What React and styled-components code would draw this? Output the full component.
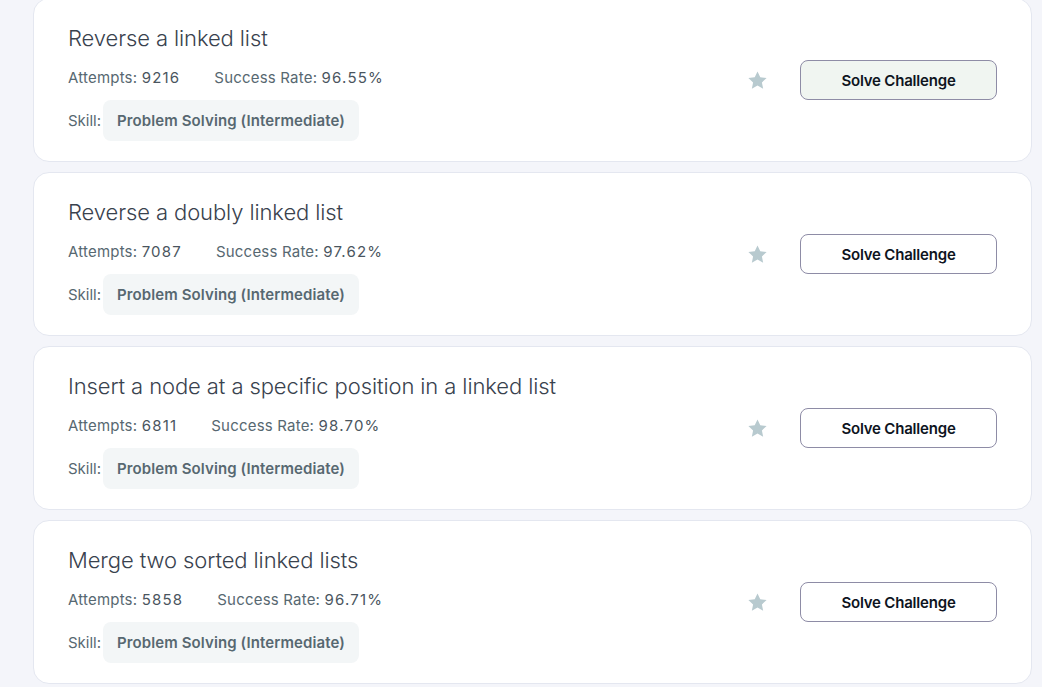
import React from 'react'
import styled, { createGlobalStyle } from 'styled-components'

const GlobalStyle = createGlobalStyle`
    html, body {
        margin: 0;
        padding: 0;
        background: #f4f5fa;
        font-family: Inter, "Noto Sans", sans-serif;
        overflow: hidden;
    }
`

const List = styled.div`
    display: flex;
    flex-direction: column;
    gap: 10px;
    margin-top: -2px;
    padding: 0 10px 0 33px;
`

const Card = styled.div`
    display: flex;
    align-items: center;
    justify-content: space-between;
    height: 164px;
    box-sizing: border-box;
    padding: 0 34px;
    background: #fff;
    border: 1px solid #e4e7f0;
    border-radius: 16px;
`

const Info = styled.div`
    display: flex;
    flex-direction: column;
    margin-top: 4px;
`

const Title = styled.h4`
    margin: 0 0 16px;
    font-size: 22px;
    font-weight: 300;
    line-height: 28px;
    color: #39424e;
    letter-spacing: -0.1px;
`

const Stats = styled.div`
    display: flex;
    gap: 34px;
    font-size: 15px;
    color: #576871;
    line-height: 20px;
    letter-spacing: 0.2px;
`

const Stat = styled.span`
    & b {
        font-weight: 400;
        color: #4a555e;
        letter-spacing: 1.2px;
    }
`

const SkillRow = styled.div`
    display: flex;
    align-items: center;
    gap: 2px;
    margin-top: 12px;
    font-size: 15px;
    color: #576871;
`

const Pill = styled.span`
    display: inline-flex;
    align-items: center;
    height: 41px;
    padding: 0 14px;
    background: #f3f6f7;
    border-radius: 8px;
    font-weight: 600;
    color: #576871;
    letter-spacing: 0.1px;
`

const Actions = styled.div`
    display: flex;
    align-items: center;
    gap: 31px;
`

const Star = styled.svg`
    width: 23px;
    height: 23px;
    fill: #b8cacf;
`

const SolveButton = styled.button`
    width: 197px;
    height: 40px;
    border: 1px solid #8e8ca6;
    border-radius: 8px;
    background: ${props => props.$active ? '#f0f5f1' : '#fff'};
    font-family: inherit;
    font-size: 15px;
    font-weight: 600;
    color: #0e141e;
    letter-spacing: -0.2px;
    cursor: pointer;
`

const challenges = [
    { title: 'Reverse a linked list', attempts: '9216', rate: '96.55%', active: true },
    { title: 'Reverse a doubly linked list', attempts: '7087', rate: '97.62%' },
    { title: 'Insert a node at a specific position in a linked list', attempts: '6811', rate: '98.70%' },
    { title: 'Merge two sorted linked lists', attempts: '5858', rate: '96.71%' },
]

const Challenge = ({ title, attempts, rate, active }) => (
    <Card>
        <Info>
            <Title>{title}</Title>
            <Stats>
                <Stat>Attempts: <b>{attempts}</b></Stat>
                <Stat>Success Rate: <b>{rate}</b></Stat>
            </Stats>
            <SkillRow>
                Skill:
                <Pill>Problem Solving (Intermediate)</Pill>
            </SkillRow>
        </Info>
        <Actions>
            <Star viewBox="0 0 24 24">
                <path d="M12 2.5l2.9 6.1 6.6.8-4.9 4.6 1.3 6.6L12 17.3l-5.9 3.3 1.3-6.6-4.9-4.6 6.6-.8z" />
            </Star>
            <SolveButton $active={active}>Solve Challenge</SolveButton>
        </Actions>
    </Card>
)

export default function App() {
    return <>
        <GlobalStyle />
        <List>
            {challenges.map(c => <Challenge key={c.title} {...c} />)}
        </List>
    </>
}
